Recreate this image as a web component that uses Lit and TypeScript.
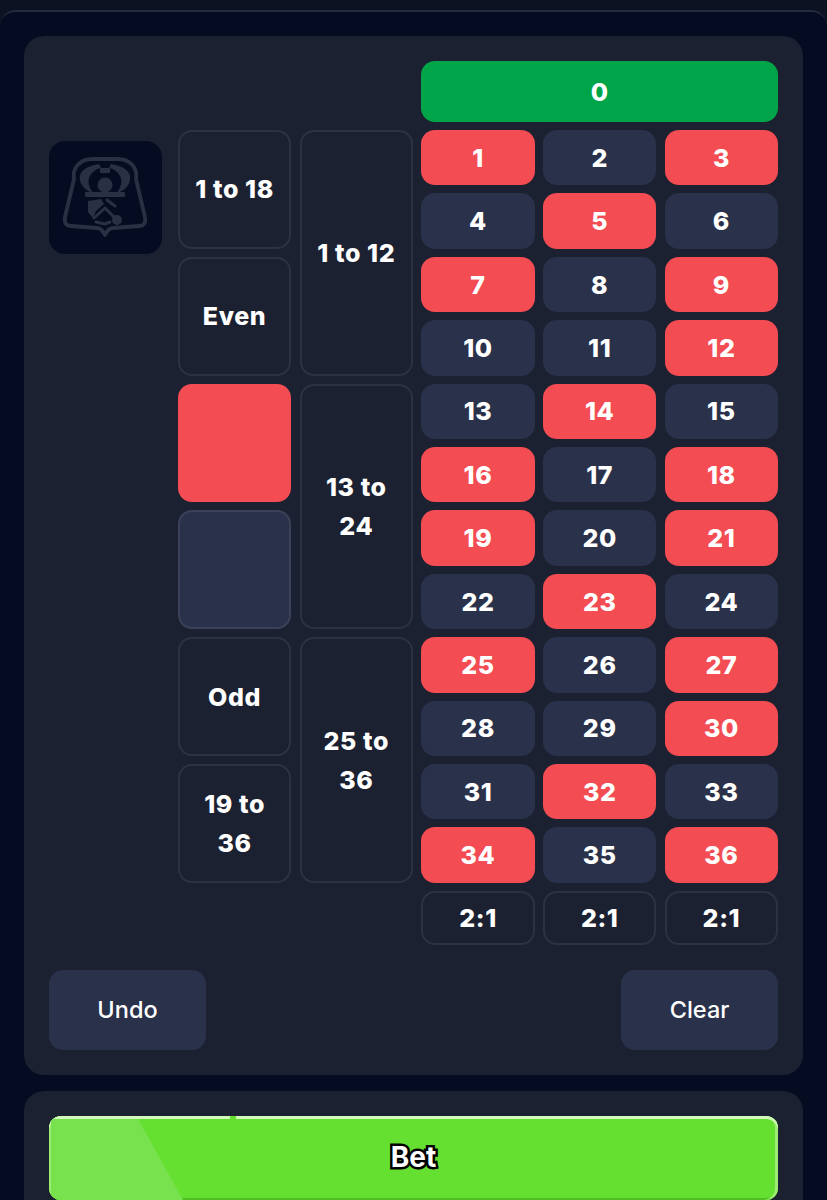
import { LitElement, html, css } from "lit";
import { customElement } from "lit/decorators.js";

const REDS = new Set([1,3,5,7,9,12,14,16,18,19,21,23,25,27,30,32,34,36]);

@customElement("app-root")
export class AppRoot extends LitElement {
  static styles = css`
    :host { display: block; width: 827px; height: 1200px; overflow: hidden; background: #0c1222; font-family: Inter, "Liberation Sans", sans-serif; color: #fff; }
    .shell { margin-top: 10px; height: 1190px; box-sizing: border-box; background: #050b20; border-top: 2px solid #262c40; border-radius: 16px 16px 0 0; padding: 24px 24px 0; display: flex; flex-direction: column; gap: 16px; }
    .panel { background: #1b2130; border-radius: 20px; padding: 25px; }
    .board { display: flex; gap: 16px; }
    .side { width: 113px; flex: none; padding-top: 80px; }
    .logo { width: 113px; height: 113px; border-radius: 16px; background: #050b20; display: block; }
    .grid { flex: 1; display: grid; grid-template-columns: repeat(5, 1fr); grid-template-rows: 61px repeat(12, 55.42px) 54px; column-gap: 8.5px; row-gap: 8px; }
    .cell { box-sizing: border-box; border-radius: 14px; padding: 1px 7px 0; display: flex; align-items: center; justify-content: center; text-align: center; font-weight: 800; font-size: 25px; line-height: 39px; letter-spacing: 0.6px; }
    .zero { grid-column: 3 / 6; grid-row: 1; background: #00a54a; }
    .red { background: #f34c52; }
    .navy { background: #2a314a; }
    .outline { border: 2px solid #2c3244; }
    .swatch-navy { background: #2a314a; border: 2px solid #3a4159; }
    .span2 { grid-row-end: span 2; }
    .span4 { grid-row-end: span 4; }
    .actions { display: flex; justify-content: space-between; margin-top: 25px; }
    .action { width: 157px; height: 80px; border-radius: 14px; background: #2a314a; display: flex; align-items: center; justify-content: center; font-weight: 500; font-size: 23.5px; }
    .bet-panel { padding-bottom: 40px; }
    .bet { position: relative; height: 84px; border-radius: 12px; background: #66e030; box-shadow: inset 0 3px 0 #d3f8bc, inset 2px 0 0 #9cec74, inset -3px 0 0 #9cec74, inset 0 -2px 0 #4fbf20; overflow: hidden; display: flex; align-items: center; justify-content: center; }
    .shine { position: absolute; left: 2px; top: 3px; bottom: 0; width: 132px; background: #78e24e; clip-path: polygon(0 0, 66% 0, 100% 100%, 0 100%); }
    .notch { position: absolute; left: 181px; top: 0; width: 6px; height: 4px; background: #66e030; }
    .bet-label { position: relative; top: -1px; font-weight: 700; font-size: 28px; color: #fff; -webkit-text-stroke: 5px #000; paint-order: stroke fill; text-shadow: 1px 1px 0 #000; }
  `;

  private logo() {
    return html`<svg class="logo" viewBox="0 0 113 113" fill="#2a3044" stroke="none">
      <path fill="none" stroke="#2a3044" stroke-width="3.8" stroke-linejoin="round" d="M25 38c-2-12 7-20 18-20h26c11 0 20 8 18 20l9 38c1 6-1 9-6 9l-26 2c-4 0-6 3-8 7-2-4-4-7-8-7l-26-2c-5 0-7-3-6-9z"/>
      <path d="M50 23C37 25 29 31 31 39 32 45 37 50 44 52 40 46 38 40 41 35 43 31 47 28 52 27z"/>
      <path d="M62 23C75 25 83 31 81 39 80 45 75 50 68 52 72 46 74 40 71 35 69 31 65 28 60 27z"/>
      <rect x="51" y="27" width="10" height="5" rx="1"/>
      <circle cx="56" cy="44" r="7.5"/>
      <rect x="36" y="51" width="40" height="5" rx="1"/>
      <path d="M39 60l13-2 3 5-8 7-3 7-5-6z"/>
      <path fill="none" stroke="#2a3044" stroke-width="3" stroke-linecap="round" stroke-linejoin="round" d="M58 59l8 6M45 77l11-10 9 9M47 81l9 2 5-2"/>
      <circle cx="68" cy="79" r="5"/>
    </svg>`;
  }

  render() {
    const nums = Array.from({ length: 36 }, (_, i) => i + 1);
    return html`<div class="shell">
      <section class="panel">
        <div class="board">
          <div class="side">${this.logo()}</div>
          <div class="grid">
            <div class="cell zero">0</div>
            <div class="cell outline span2" style="grid-column:1;grid-row-start:2">1 to 18</div>
            <div class="cell outline span2" style="grid-column:1;grid-row-start:4">Even</div>
            <div class="cell red span2" style="grid-column:1;grid-row-start:6"></div>
            <div class="cell swatch-navy span2" style="grid-column:1;grid-row-start:8"></div>
            <div class="cell outline span2" style="grid-column:1;grid-row-start:10">Odd</div>
            <div class="cell outline span2" style="grid-column:1;grid-row-start:12">19 to 36</div>
            <div class="cell outline span4" style="grid-column:2;grid-row-start:2">1 to 12</div>
            <div class="cell outline span4" style="grid-column:2;grid-row-start:6">13 to 24</div>
            <div class="cell outline span4" style="grid-column:2;grid-row-start:10">25 to 36</div>
            ${nums.map((n) => html`<div class="cell ${REDS.has(n) ? "red" : "navy"}" style="grid-column:${3 + ((n - 1) % 3)};grid-row:${2 + Math.floor((n - 1) / 3)}">${n}</div>`)}
            ${[3, 4, 5].map((c) => html`<div class="cell outline" style="grid-column:${c};grid-row:14">2:1</div>`)}
          </div>
        </div>
        <div class="actions">
          <div class="action">Undo</div>
          <div class="action">Clear</div>
        </div>
      </section>
      <section class="panel bet-panel">
        <div class="bet"><div class="shine"></div><div class="notch"></div><span class="bet-label">Bet</span></div>
      </section>
    </div>`;
  }
}
